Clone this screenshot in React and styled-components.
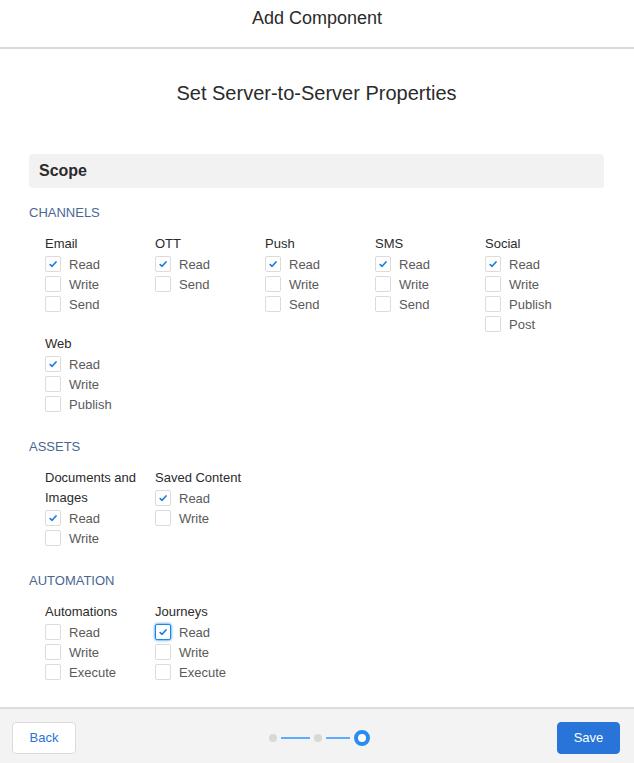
import React from "react";
import styled, { createGlobalStyle } from "styled-components";

const GlobalStyle = createGlobalStyle`
  html, body { margin: 0; padding: 0; background: #ffffff; }
  body { font-family: "Liberation Sans", Arial, sans-serif; }
  * { box-sizing: border-box; }
`;

const Page = styled.div`
  display: flex;
  flex-direction: column;
  min-height: 100vh;
  width: 634px;
`;

const Header = styled.header`
  height: 49px;
  border-bottom: 2px solid #d9d9d9;
  display: flex;
  align-items: center;
  justify-content: center;
  padding-bottom: 11px;
  font-size: 18px;
  color: #2b2b2b;
`;

const Body = styled.main`
  flex: 1;
  padding: 32px 30px 25px 29px;
`;

const Title = styled.h1`
  margin: 0;
  font-size: 20px;
  line-height: 24px;
  font-weight: 400;
  color: #2b2b2b;
  text-align: center;
`;

const ScopeBar = styled.div`
  margin-top: 49px;
  height: 34px;
  background: #f3f2f2;
  border-radius: 4px;
  display: flex;
  align-items: center;
  padding-left: 10px;
  font-size: 16px;
  font-weight: 700;
  color: #2b2b2b;
`;

const SectionLabel = styled.div`
  margin-top: ${(p) => (p.$first ? "15px" : "23px")};
  font-size: 13px;
  line-height: 20px;
  color: #4a6794;
  text-transform: uppercase;
`;

const Groups = styled.div`
  margin-top: 11px;
  padding-left: 16px;
  display: flex;
  flex-wrap: wrap;
`;

const Group = styled.div`
  width: 110px;
  padding-right: 12px;
  display: flex;
  flex-direction: column;
`;

const GroupTitle = styled.div`
  font-size: 13px;
  line-height: 20px;
  color: #2b2b2b;
`;

const Item = styled.label`
  display: flex;
  align-items: center;
  height: 20px;
  gap: 8px;
  font-size: 13px;
  color: #5a5a5a;
`;

const Box = styled.span`
  width: 16px;
  height: 16px;
  flex: none;
  border: 1px solid ${(p) => (p.$focus ? "#1589ee" : "#dddbda")};
  border-radius: 2px;
  background: #fff;
  display: flex;
  align-items: center;
  justify-content: center;
  box-shadow: ${(p) => (p.$focus ? "0 0 3px #0070d2" : "none")};
`;

const Footer = styled.footer`
  height: 56px;
  border-top: 2px solid #dcdcdc;
  background: #f3f3f3;
  display: flex;
  align-items: center;
  justify-content: space-between;
  padding: 0 14px 0 12px;
`;

const Button = styled.button`
  height: 32px;
  width: ${(p) => (p.$primary ? "63px" : "64px")};
  border-radius: 4px;
  font-family: "Liberation Sans", Arial, sans-serif;
  font-size: 13px;
  cursor: pointer;
  border: 1px solid ${(p) => (p.$primary ? "#2874d8" : "#dddbda")};
  background: ${(p) => (p.$primary ? "#2874d8" : "#ffffff")};
  color: ${(p) => (p.$primary ? "#ffffff" : "#2a74d5")};
  margin-top: 3px;
`;

const Progress = styled.div`
  display: flex;
  align-items: center;
  gap: 4px;
  margin-top: 3px;
  margin-left: 5px;
`;

const Dot = styled.span`
  width: 8px;
  height: 8px;
  border-radius: 50%;
  background: #d8d8d8;
`;

const Line = styled.span`
  width: ${(p) => p.$w}px;
  height: 2px;
  background: #5aaeff;
`;

const Ring = styled.span`
  width: 16px;
  height: 16px;
  border-radius: 50%;
  border: 4px solid #2b8cf0;
  background: #ffffff;
`;

const Check = () => (
  <svg width="10" height="10" viewBox="0 0 10 10">
    <path d="M2.2 5.6 L4.1 7.3 L8 3" fill="none" stroke="#1a7de6" strokeWidth="1.7" strokeLinecap="round" strokeLinejoin="round" />
  </svg>
);

const sections = [
  {
    label: "Channels",
    groups: [
      { title: "Email", items: [["Read", true], ["Write"], ["Send"]] },
      { title: "OTT", items: [["Read", true], ["Send"]] },
      { title: "Push", items: [["Read", true], ["Write"], ["Send"]] },
      { title: "SMS", items: [["Read", true], ["Write"], ["Send"]] },
      { title: "Social", items: [["Read", true], ["Write"], ["Publish"], ["Post"]] },
      { title: "Web", items: [["Read", true], ["Write"], ["Publish"]] },
    ],
  },
  {
    label: "Assets",
    groups: [
      { title: "Documents and Images", items: [["Read", true], ["Write"]] },
      { title: "Saved Content", items: [["Read", true], ["Write"]] },
    ],
  },
  {
    label: "Automation",
    groups: [
      { title: "Automations", items: [["Read"], ["Write"], ["Execute"]] },
      { title: "Journeys", items: [["Read", true, true], ["Write"], ["Execute"]] },
    ],
  },
];

export default function App() {
  return (
    <>
      <GlobalStyle />
      <Page>
        <Header>Add Component</Header>
        <Body>
          <Title>Set Server-to-Server Properties</Title>
          <ScopeBar>Scope</ScopeBar>
          {sections.map((s, si) => (
            <React.Fragment key={s.label}>
              <SectionLabel $first={si === 0}>{s.label}</SectionLabel>
              <Groups>
                {s.groups.map((g) => (
                  <Group key={g.title}>
                    <GroupTitle>{g.title}</GroupTitle>
                    {g.items.map(([name, checked, focus]) => (
                      <Item key={name}>
                        <Box $focus={focus}>{checked && <Check />}</Box>
                        {name}
                      </Item>
                    ))}
                  </Group>
                ))}
              </Groups>
            </React.Fragment>
          ))}
        </Body>
        <Footer>
          <Button>Back</Button>
          <Progress>
            <Dot />
            <Line $w={29} />
            <Dot />
            <Line $w={24} />
            <Ring />
          </Progress>
          <Button $primary>Save</Button>
        </Footer>
      </Page>
    </>
  );
}
